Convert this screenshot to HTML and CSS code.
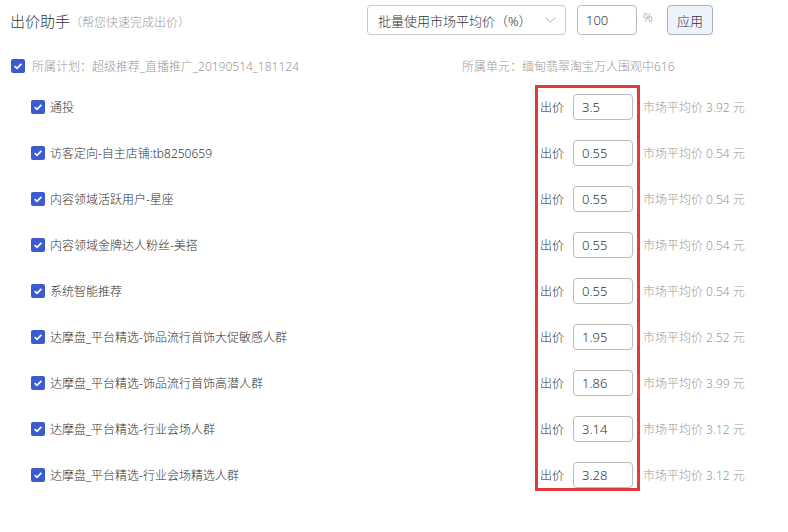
FILE: index.html
```html
<!DOCTYPE html>
<html lang="zh-CN">
<head>
    <meta charset="UTF-8">
    <title>出价助手</title>
    <link rel="stylesheet" href="styles.css">
</head>
<body>
    <div class="toolbar">
        <div class="title">出价助手<span class="subtitle">（帮您快速完成出价）</span></div>
        <div class="select">
            <span>批量使用市场平均价（%）</span>
            <svg class="chevron" width="11" height="6" viewBox="0 0 11 6"><polyline points="0.5,0.5 5.5,5 10.5,0.5" fill="none" stroke="#b4b4b4" stroke-width="1"/></svg>
        </div>
        <div class="field field-wide">100</div>
        <span class="unit">%</span>
        <button class="apply">应用</button>
    </div>

    <div class="plan">
        <span class="check"><svg width="14" height="14" viewBox="0 0 14 14"><polyline points="3.6,7.2 6,9.4 10.4,4.8" fill="none" stroke="#fff" stroke-width="1.7"/></svg></span>
        <span class="plan-name">所属计划：超级推荐_直播推广_20190514_181124</span>
        <span class="plan-unit">所属单元：缅甸翡翠淘宝万人围观中616</span>
    </div>

    <div class="grid">
        <div class="names">
            <div class="cell"><span class="check"><svg width="14" height="14" viewBox="0 0 14 14"><polyline points="3.6,7.2 6,9.4 10.4,4.8" fill="none" stroke="#fff" stroke-width="1.7"/></svg></span>通投</div>
            <div class="cell"><span class="check"><svg width="14" height="14" viewBox="0 0 14 14"><polyline points="3.6,7.2 6,9.4 10.4,4.8" fill="none" stroke="#fff" stroke-width="1.7"/></svg></span>访客定向-自主店铺:tb8250659</div>
            <div class="cell"><span class="check"><svg width="14" height="14" viewBox="0 0 14 14"><polyline points="3.6,7.2 6,9.4 10.4,4.8" fill="none" stroke="#fff" stroke-width="1.7"/></svg></span>内容领域活跃用户-星座</div>
            <div class="cell"><span class="check"><svg width="14" height="14" viewBox="0 0 14 14"><polyline points="3.6,7.2 6,9.4 10.4,4.8" fill="none" stroke="#fff" stroke-width="1.7"/></svg></span>内容领域金牌达人粉丝-美搭</div>
            <div class="cell"><span class="check"><svg width="14" height="14" viewBox="0 0 14 14"><polyline points="3.6,7.2 6,9.4 10.4,4.8" fill="none" stroke="#fff" stroke-width="1.7"/></svg></span>系统智能推荐</div>
            <div class="cell"><span class="check"><svg width="14" height="14" viewBox="0 0 14 14"><polyline points="3.6,7.2 6,9.4 10.4,4.8" fill="none" stroke="#fff" stroke-width="1.7"/></svg></span>达摩盘_平台精选-饰品流行首饰大促敏感人群</div>
            <div class="cell"><span class="check"><svg width="14" height="14" viewBox="0 0 14 14"><polyline points="3.6,7.2 6,9.4 10.4,4.8" fill="none" stroke="#fff" stroke-width="1.7"/></svg></span>达摩盘_平台精选-饰品流行首饰高潜人群</div>
            <div class="cell"><span class="check"><svg width="14" height="14" viewBox="0 0 14 14"><polyline points="3.6,7.2 6,9.4 10.4,4.8" fill="none" stroke="#fff" stroke-width="1.7"/></svg></span>达摩盘_平台精选-行业会场人群</div>
            <div class="cell"><span class="check"><svg width="14" height="14" viewBox="0 0 14 14"><polyline points="3.6,7.2 6,9.4 10.4,4.8" fill="none" stroke="#fff" stroke-width="1.7"/></svg></span>达摩盘_平台精选-行业会场精选人群</div>
        </div>

        <div class="bids">
            <div class="cell"><span class="bid-label">出价</span><span class="field">3.5</span></div>
            <div class="cell"><span class="bid-label">出价</span><span class="field">0.55</span></div>
            <div class="cell"><span class="bid-label">出价</span><span class="field">0.55</span></div>
            <div class="cell"><span class="bid-label">出价</span><span class="field">0.55</span></div>
            <div class="cell"><span class="bid-label">出价</span><span class="field">0.55</span></div>
            <div class="cell"><span class="bid-label">出价</span><span class="field">1.95</span></div>
            <div class="cell"><span class="bid-label">出价</span><span class="field">1.86</span></div>
            <div class="cell"><span class="bid-label">出价</span><span class="field">3.14</span></div>
            <div class="cell"><span class="bid-label">出价</span><span class="field">3.28</span></div>
        </div>

        <div class="market">
            <div class="cell">市场平均价 3.92 元</div>
            <div class="cell">市场平均价 0.54 元</div>
            <div class="cell">市场平均价 0.54 元</div>
            <div class="cell">市场平均价 0.54 元</div>
            <div class="cell">市场平均价 0.54 元</div>
            <div class="cell">市场平均价 2.52 元</div>
            <div class="cell">市场平均价 3.99 元</div>
            <div class="cell">市场平均价 3.12 元</div>
            <div class="cell">市场平均价 3.12 元</div>
        </div>
    </div>
</body>
</html>
```

FILE: styles.css
```css
:root {
    --text: #333;
    --muted: #999;
    --line: #c9c9c9;
    --blue: #3d5bd0;
    --red: #e23a3a;
}

body {
    margin: 0;
    background: #fff;
    color: var(--text);
    font-family: "Noto Sans", "Noto Sans CJK SC", sans-serif;
    font-size: 12px;
    font-weight: 300;
}

.toolbar {
    height: 40px;
    display: flex;
    align-items: center;
    padding-left: 10px;
}

.title {
    width: 357px;
    font-size: 15px;
    color: #333;
}

.subtitle {
    font-size: 12px;
    color: var(--muted);
}

.select {
    width: 199px;
    height: 30px;
    box-sizing: border-box;
    border: 1px solid var(--line);
    border-radius: 4px;
    display: flex;
    align-items: center;
    justify-content: space-between;
    padding: 0 9px 0 10px;
    font-size: 13px;
}

.field {
    width: 60px;
    height: 26px;
    box-sizing: border-box;
    border: 1px solid #bcbcbc;
    border-radius: 4px;
    display: flex;
    align-items: center;
    padding-left: 8px;
    font-size: 13px;
    color: #333;
}

.field-wide {
    height: 30px;
    margin-left: 11px;
}

.unit {
    color: var(--muted);
    margin: -6px 0 0 6px;
    width: 24px;
}

.apply {
    width: 46px;
    height: 30px;
    border: 1px solid #a8b0c0;
    border-radius: 4px;
    background: #eef2fa;
    color: #333;
    font-family: inherit;
    font-size: 13px;
    font-weight: 300;
    padding: 0;
}

.plan {
    height: 44px;
    padding: 8px 0 0 11px;
    box-sizing: border-box;
    display: flex;
    align-items: center;
    color: var(--muted);
}

.plan-name {
    width: 430px;
    margin-left: 7px;
}

.check {
    width: 14px;
    height: 14px;
    border-radius: 2px;
    background: var(--blue);
    display: inline-flex;
    flex-shrink: 0;
}

.grid {
    display: flex;
}

.cell {
    height: 46px;
    display: flex;
    align-items: center;
}

.names {
    width: 503px;
    padding-left: 31px;
}

.names .check {
    margin-right: 5px;
}

.bids {
    width: 107px;
    height: 408px;
    outline: 3px solid var(--red);
    outline-offset: -4px;
}

.bid-label {
    margin: 0 9px 0 6px;
}

.market {
    padding-left: 2px;
    color: var(--muted);
}
```
